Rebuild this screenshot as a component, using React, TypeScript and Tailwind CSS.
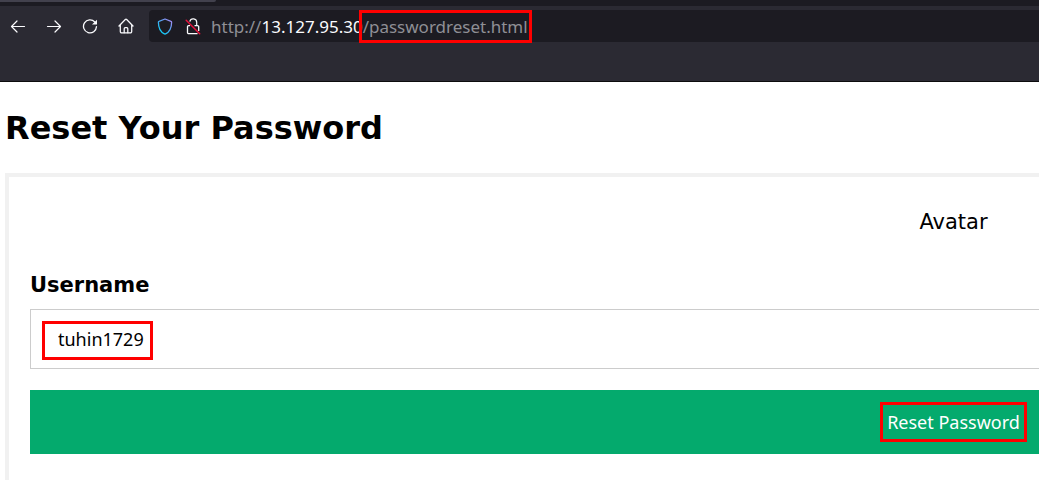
import React from "react";

const iconButton = "flex h-6 w-9 items-center justify-center text-[#fbfbfe]";

function BackIcon() {
  return (
    <svg width="16" height="16" viewBox="0 0 16 16" fill="none" stroke="currentColor" strokeWidth="1.2" strokeLinecap="round" strokeLinejoin="round" aria-hidden="true">
      <path d="M14.5 8.500H1.500M7 3L1.500 8.500L7 14" />
    </svg>
  );
}

function ForwardIcon() {
  return (
    <svg width="16" height="16" viewBox="0 0 16 16" fill="none" stroke="currentColor" strokeWidth="1.2" strokeLinecap="round" strokeLinejoin="round" aria-hidden="true">
      <path d="M1.500 8.500H14.500M9 3L14.500 8.500L9 14" />
    </svg>
  );
}

function ReloadIcon() {
  return (
    <svg width="16" height="16" viewBox="0 0 16 16" fill="none" aria-hidden="true">
      <path d="M12.8 4A6.500 6.500 0 1 0 14.500 8.600" stroke="currentColor" strokeWidth="1.3" strokeLinecap="round" />
      <path d="M15 1.700V6.100a.5.5 0 0 1-.5.5H10z" fill="currentColor" />
    </svg>
  );
}

function HomeIcon() {
  return (
    <svg width="16" height="16" viewBox="0 0 16 16" fill="none" stroke="currentColor" strokeWidth="1.25" strokeLinecap="round" strokeLinejoin="round" aria-hidden="true">
      <path d="M1 8L7.300 1.500a1 1 0 0 1 1.400 0L15 8M2.300 7v6.500a1.400 1.400 0 0 0 1.400 1.400h8.600a1.400 1.400 0 0 0 1.400-1.400V7" />
      <path d="M6.200 14.700v-4a1 1 0 0 1 1-1h1.600a1 1 0 0 1 1 1v4" />
    </svg>
  );
}

function ShieldIcon() {
  return (
    <svg width="16" height="17" viewBox="0 0 16 17" fill="none" aria-hidden="true">
      <defs>
        <linearGradient id="shield" x1="2" y1="15" x2="14" y2="2" gradientUnits="userSpaceOnUse">
          <stop stopColor="#00ddff" />
          <stop offset="0.5" stopColor="#45a5ee" />
          <stop offset="1" stopColor="#a78bf5" />
        </linearGradient>
      </defs>
      <path d="M8 1L14 3.400a.8.8 0 0 1 .6.8c0 5-1.500 9.400-6 11.600a1.200 1.200 0 0 1-1.200 0C2.900 13.600 1.400 9.200 1.400 4.200a.8.8 0 0 1 .6-.8z" stroke="url(#shield)" strokeWidth="1.3" strokeLinejoin="round" />
    </svg>
  );
}

function InsecureIcon() {
  return (
    <svg width="16" height="17" viewBox="0 0 16 17" fill="none" aria-hidden="true">
      <path d="M4.800 3.600a3.500 3.500 0 0 1 6.900 1v3.200" stroke="#fbfbfe" strokeWidth="1.2" />
      <path d="M9.500 7.600H12.500a1.200 1.200 0 0 1 1.200 1.200v4.200M12.500 15.600H3.700a1.200 1.200 0 0 1-1.200-1.200V8.800A1.200 1.200 0 0 1 3.700 7.600h1.300" stroke="#fbfbfe" strokeWidth="1.300" />
      <path d="M1.200 2.200L14.700 15.700" stroke="#e8113c" strokeWidth="1.500" strokeLinecap="round" />
    </svg>
  );
}

function BrowserChrome() {
  return (
    <header className="border-b border-[#0c0c0d] bg-[#2b2a33]">
      <div className="h-1.5 bg-[#1c1b22]">
        <div className="h-0.5 w-[216px] rounded-br-sm bg-[#42414d]" />
      </div>
      <div className="flex h-[75px] items-start pt-1">
        <nav className="flex h-8 w-[149px] shrink-0 items-center" aria-label="Browser">
          <button type="button" aria-label="Back" className={iconButton}><BackIcon /></button>
          <button type="button" aria-label="Forward" className={iconButton}><ForwardIcon /></button>
          <button type="button" aria-label="Reload" className={iconButton}><ReloadIcon /></button>
          <button type="button" aria-label="Home" className={iconButton}><HomeIcon /></button>
        </nav>
        <div className="flex h-8 min-w-0 flex-1 items-center rounded-l bg-[#1c1b22] pl-2">
          <button type="button" aria-label="Tracking protection"><ShieldIcon /></button>
          <button type="button" aria-label="Connection is not secure" className="ml-3"><InsecureIcon /></button>
          <div className="ml-2.5 flex whitespace-nowrap pt-0.5 font-['Noto_Sans',sans-serif] text-[17px] leading-8 text-[#8f8f95]">
            <span>http://</span>
            <span className="text-[#fbfbfe]">13.127.95.30</span>
            <span className="relative">
              /passwordreset.html
              <span className="pointer-events-none absolute -inset-x-1 -top-px bottom-0 border-3 border-[#ff0000]" />
            </span>
          </div>
        </div>
      </div>
    </header>
  );
}

export default function App() {
  return (
    <div className="overflow-hidden bg-white font-['DejaVu_Sans',sans-serif] text-black">
      <BrowserChrome />
      <main className="w-full min-w-[1902px] pl-[5px] pt-6">
        <h1 className="text-[32px] font-bold leading-11">Reset Your Password</h1>
        <form className="mt-[23px] border-4 border-[#f1f1f1]" onSubmit={(e) => e.preventDefault()}>
          <div className="pt-[33px] text-center text-[21px] leading-6">Avatar</div>
          <div className="px-[21px] pb-8 pt-[39px]">
            <label htmlFor="username" className="block text-[21px] font-bold leading-6">Username</label>
            <div className="relative mt-3">
              <input
                id="username"
                type="text"
                defaultValue="tuhin1729"
                className="block h-15 w-full border border-[#cccccc] bg-white px-[27px] font-['Noto_Sans',sans-serif] text-[18px] outline-none"
              />
              <span className="pointer-events-none absolute left-3 top-3 h-[39px] w-[111px] border-3 border-[#ff0000]" />
            </div>
            <button type="submit" className="mt-[21px] flex h-16 w-full items-center justify-center bg-[#04aa6d] font-['Noto_Sans',sans-serif] text-[18px] leading-6 text-white">
              <span className="relative">
                Reset Password
                <span className="pointer-events-none absolute -inset-x-[7px] -inset-y-2 border-3 border-[#ff0000]" />
              </span>
            </button>
          </div>
        </form>
      </main>
    </div>
  );
}
